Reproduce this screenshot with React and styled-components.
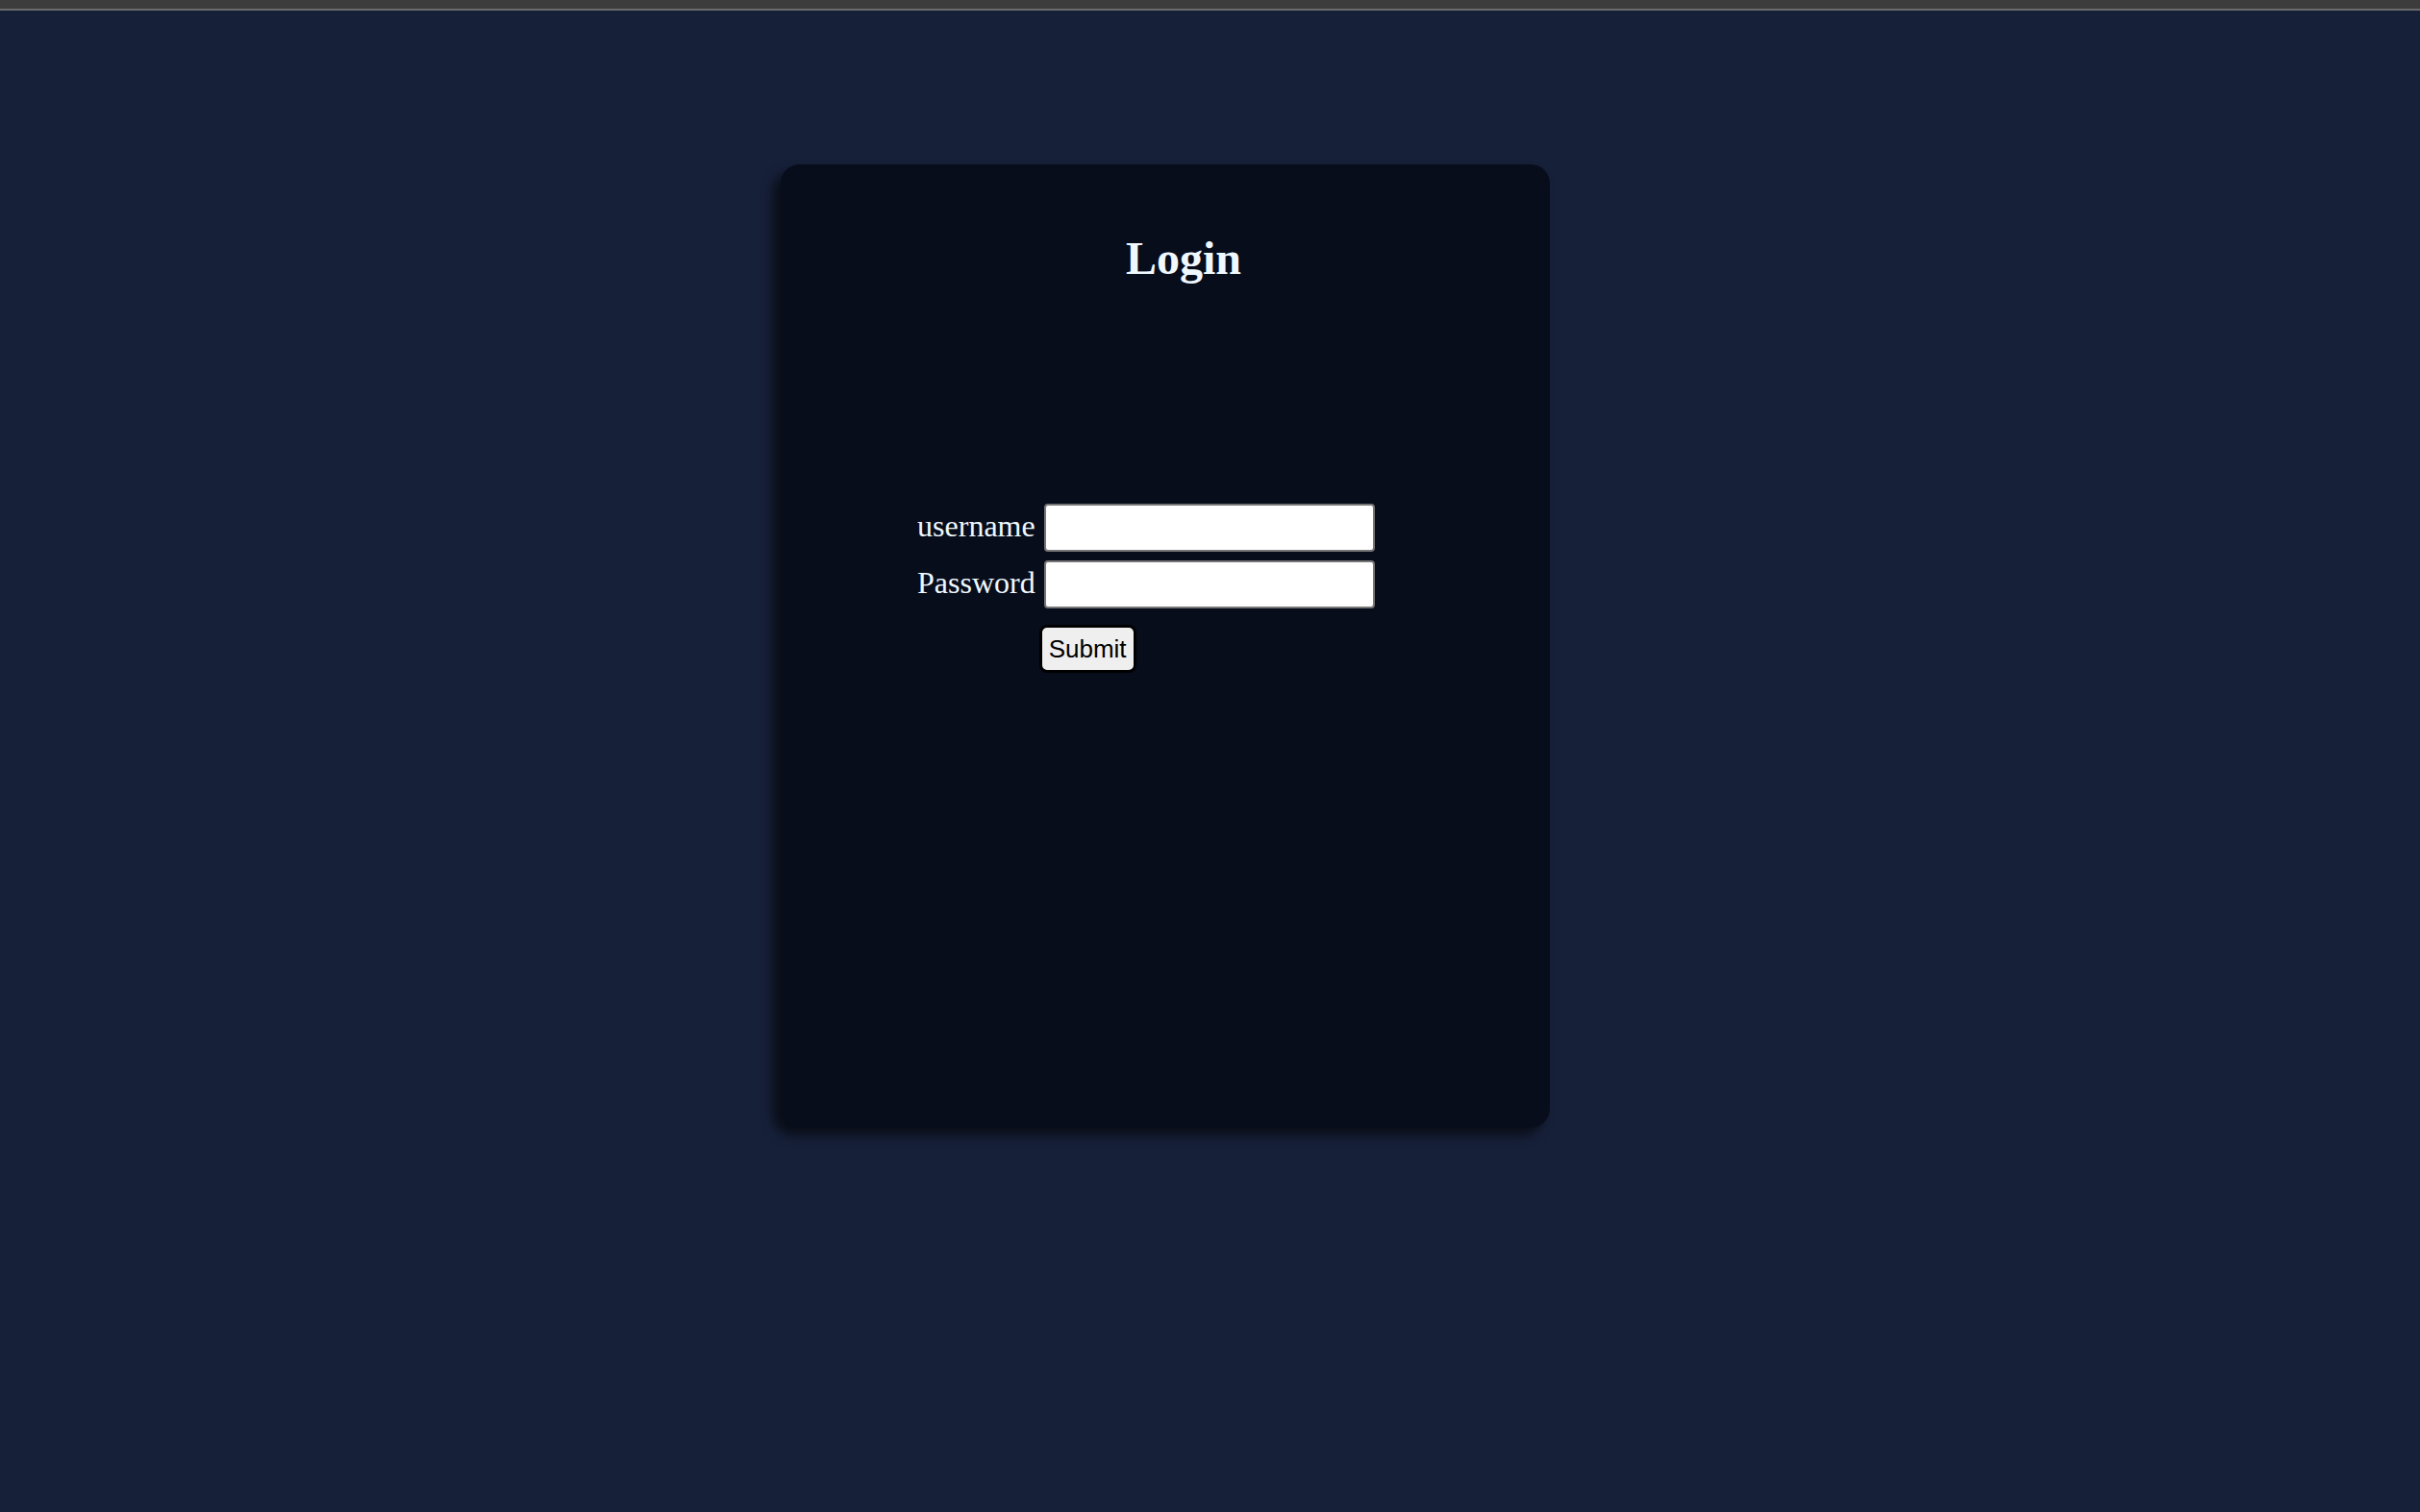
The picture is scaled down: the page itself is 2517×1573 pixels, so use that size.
import React from 'react';
import styled, { createGlobalStyle } from 'styled-components';

const GlobalStyle = createGlobalStyle`
  html, body {
    margin: 0;
    padding: 0;
    background: #162039;
    font-family: "Liberation Serif", "Times New Roman", serif;
  }
`

const WindowBar = styled.div`
  height: 9px;
  background: #3c3c3c;
  border-bottom: 2px solid #6c6c6c;
`

const Page = styled.main`
  display: flex;
  justify-content: center;
  padding: 160px 93px 0 0;
  min-height: 1402px;
  box-sizing: border-box;
`

const Card = styled.section`
  width: 800px;
  height: 1002px;
  box-sizing: border-box;
  padding: 30px 0 0 38px;
  background: #070d1b;
  border-radius: 20px;
  box-shadow: -8px 8px 12px rgba(0, 0, 0, 0.6);
  display: flex;
  flex-direction: column;
`

const Title = styled.h2`
  margin: 40px 0;
  text-align: center;
  font-size: 48px;
  font-weight: 700;
  color: #f0f8ff;
`

const Form = styled.form`
  display: grid;
  grid-template-columns: auto 344px;
  column-gap: 9px;
  row-gap: 9px;
  align-items: center;
  align-self: flex-start;
  margin: 188px 0 0 104px;
`

const Label = styled.label`
  font-size: 32px;
  color: #f0f8ff;
  text-align: right;
  margin-top: -3px;
`

const Input = styled.input`
  width: 344px;
  height: 50px;
  box-sizing: border-box;
  border: 2px solid #767676;
  border-radius: 4px;
  background: #fff;
  font-size: 26px;
  padding: 2px 4px;
`

const SubmitButton = styled.button`
  grid-column: 2;
  justify-self: start;
  margin: 8px 0 0 -5px;
  padding: 7px 7px;
  border: 3px solid #000;
  border-radius: 8px;
  background: #efefef;
  color: #000;
  font-family: "Liberation Sans", Arial, sans-serif;
  font-size: 26px;
  line-height: 30px;
`

const App = () => {
  return (
    <>
      <GlobalStyle />
      <WindowBar />
      <Page>
        <Card>
          <Title>Login</Title>
          <Form onSubmit={(e) => e.preventDefault()}>
            <Label htmlFor="username">username</Label>
            <Input id="username" type="text" />
            <Label htmlFor="password">Password</Label>
            <Input id="password" type="password" />
            <SubmitButton type="submit">Submit</SubmitButton>
          </Form>
        </Card>
      </Page>
    </>
  );
};

export default App;
